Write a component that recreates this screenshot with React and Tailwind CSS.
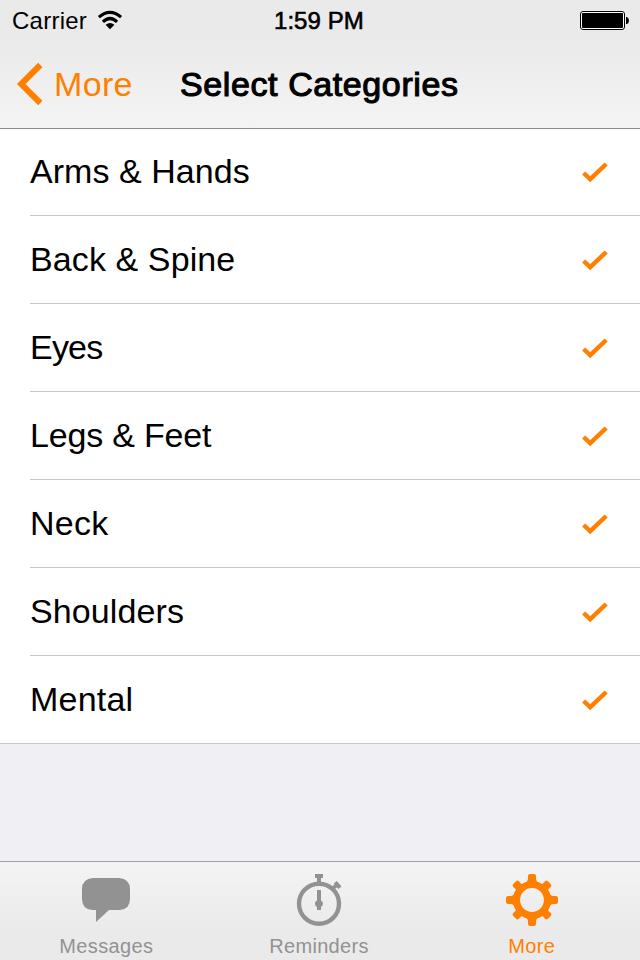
const categories = [
  ['Arms & Hands', 'tracking-[0.05px]'],
  ['Back & Spine', 'tracking-[0.1px]'],
  ['Eyes', 'tracking-[-0.8px]'],
  ['Legs & Feet', 'tracking-[-0.2px]'],
  ['Neck', 'tracking-[0.3px]'],
  ['Shoulders', 'tracking-[0.1px]'],
  ['Mental', 'tracking-[0.2px]'],
];

function WifiIcon() {
  return (
    <svg className="ml-[10px] mt-[10px] h-[20px] w-[26px]" viewBox="0 0 26 20" fill="none" stroke="#000" strokeWidth="3.1">
      <path d="M1.9 7.2Q13 -2.4 24.1 7.2" />
      <path d="M5.9 11.8Q13 5.2 20.1 11.8" />
      <path d="M8.6 14.8Q13 11.4 17.4 14.8L13 19.2Z" fill="#000" stroke="none" />
    </svg>
  );
}

function BatteryIcon() {
  return (
    <svg className="h-[20px] w-[50px]" viewBox="0 0 50 20">
      <rect x="0.5" y="0.5" width="44" height="18" rx="2.5" fill="#fff" stroke="#000" />
      <rect x="2" y="2" width="41" height="15" rx="0.8" />
      <path d="M46 6h1q2 1 2 3.5t-2 3.5h-1z" />
    </svg>
  );
}

function CheckIcon() {
  return (
    <svg className="h-[22px] w-[28px]" viewBox="0 0 28 22" fill="none" stroke="#ff8000" strokeWidth="4.4">
      <path d="M3.6 12L10.2 18.2L26.2 3" />
    </svg>
  );
}

function MessagesIcon() {
  return (
    <svg className="h-[56px] w-[56px]" viewBox="0 0 56 56" fill="#929292">
      <path d="M15 6H41Q52 7 52 17V27Q52 37 42 38H31L18 50V38H14Q4 37 4 27V17Q4 7 15 6Z" />
    </svg>
  );
}

function RemindersIcon() {
  return (
    <svg className="h-[56px] w-[56px]" viewBox="0 0 56 56" fill="#929292">
      <circle cx="28" cy="31.7" r="20" fill="none" stroke="#929292" strokeWidth="4.4" />
      <path d="M24 2h8v4h-2v6h-4V6h-2zM26 18h4v10.5q2 1 2 3t-2 3.5V38h-4v-3q-2-1-2-3.5t2-3z" />
      <path d="M40 17.5L46 13M44.3 10.3L49 15.8" stroke="#929292" strokeWidth="4" />
    </svg>
  );
}

function GearIcon() {
  return (
    <svg className="h-[56px] w-[56px]" viewBox="0 0 56 56">
      <g fill="#ff8000">
        {[0, 90, 180, 270].map((angle) => (
          <path key={angle} transform={`rotate(${angle} 28 28)`} d="M20 12q4-2.5 4-5.5V4q0-2 2-2h4q2 0 2 2v2.5q0 3 4 5.5z" />
        ))}
        {[45, 135, 225, 315].map((angle) => (
          <path key={angle} transform={`rotate(${angle} 28 28)`} d="M20.5 12.5q3.7-2 3.5-4V5.5q0-2 2-2h4q2 0 2 2V8.5q-.2 2 3.5 4z" />
        ))}
      </g>
      <circle cx="28" cy="28" r="15.5" fill="none" stroke="#ff8000" strokeWidth="7.2" />
    </svg>
  );
}

function Tab({ icon, label, color, spacing }) {
  return (
    <button className={`flex h-full w-[212.7px] shrink-0 flex-col items-center pt-[10px] ${color}`}>
      {icon}
      <span className={`mt-[7px] text-[20px] leading-[23px] ${spacing}`}>{label}</span>
    </button>
  );
}

export default function App() {
  return (
    <div className="flex h-[960px] w-[640px] flex-col overflow-hidden bg-[#efeff4] font-['Liberation_Sans',Arial,sans-serif] text-black">
      <header className="h-[129px] shrink-0 border-b border-[#8b8b8d] bg-linear-to-b from-[#eaeaea] from-30% to-[#f4f4f4]">
        <div className="grid h-[40px] grid-cols-[274px_1fr_60px] text-[24px] leading-[42px]">
          <div className="flex pl-[12px]">
            <span className="tracking-[0.25px]">Carrier</span>
            <WifiIcon />
          </div>
          <span className="tracking-[0.05px] [-webkit-text-stroke:0.6px_#000]">1:59 PM</span>
          <div className="pt-[11px]"><BatteryIcon /></div>
        </div>
        <div className="flex h-[88px] items-center">
          <button className="flex w-[180px] shrink-0 items-center text-[#ff8000]">
            <svg className="ml-[16px] h-[44px] w-[28px]" viewBox="0 0 28 44" fill="none" stroke="currentColor" strokeWidth="6">
              <path d="M24.3 3L5.2 22L24.3 41" />
            </svg>
            <span className="ml-[10px] text-[34px] leading-[40px] tracking-[0.35px]">More</span>
          </button>
          <h1 className="whitespace-nowrap text-[34px] leading-[40px] tracking-[0.6px] [-webkit-text-stroke:1.1px_#000]">Select Categories</h1>
        </div>
      </header>
      <main className="flex-1">
        <ul className="border-b border-[#c8c7cc] bg-white pl-[30px]">
          {categories.map(([name, spacing], index) => (
            <li key={name} className={`flex justify-between pr-[32px] ${index === 0 ? 'h-[87px] pt-[22px]' : index < categories.length - 1 ? 'h-[88px] pt-[23px]' : 'h-[87px] pt-[23px]'} ${index < categories.length - 1 ? 'border-b border-[#c8c7cc]' : ''}`}>
              <span className={`text-[34px] leading-[40px] ${spacing}`}>{name}</span>
              <div className="pt-[10px]"><CheckIcon /></div>
            </li>
          ))}
        </ul>
      </main>
      <nav className="flex h-[99px] shrink-0 border-t border-[#a2a2a6] bg-linear-to-b from-[#f4f4f4] to-[#eaeaea] to-70%">
        <Tab icon={<MessagesIcon />} label="Messages" color="text-[#929292]" spacing="tracking-[0.35px]" />
        <Tab icon={<RemindersIcon />} label="Reminders" color="text-[#929292]" spacing="tracking-[0.3px]" />
        <Tab icon={<GearIcon />} label="More" color="text-[#ff8000]" spacing="tracking-[0.4px]" />
      </nav>
    </div>
  );
}
